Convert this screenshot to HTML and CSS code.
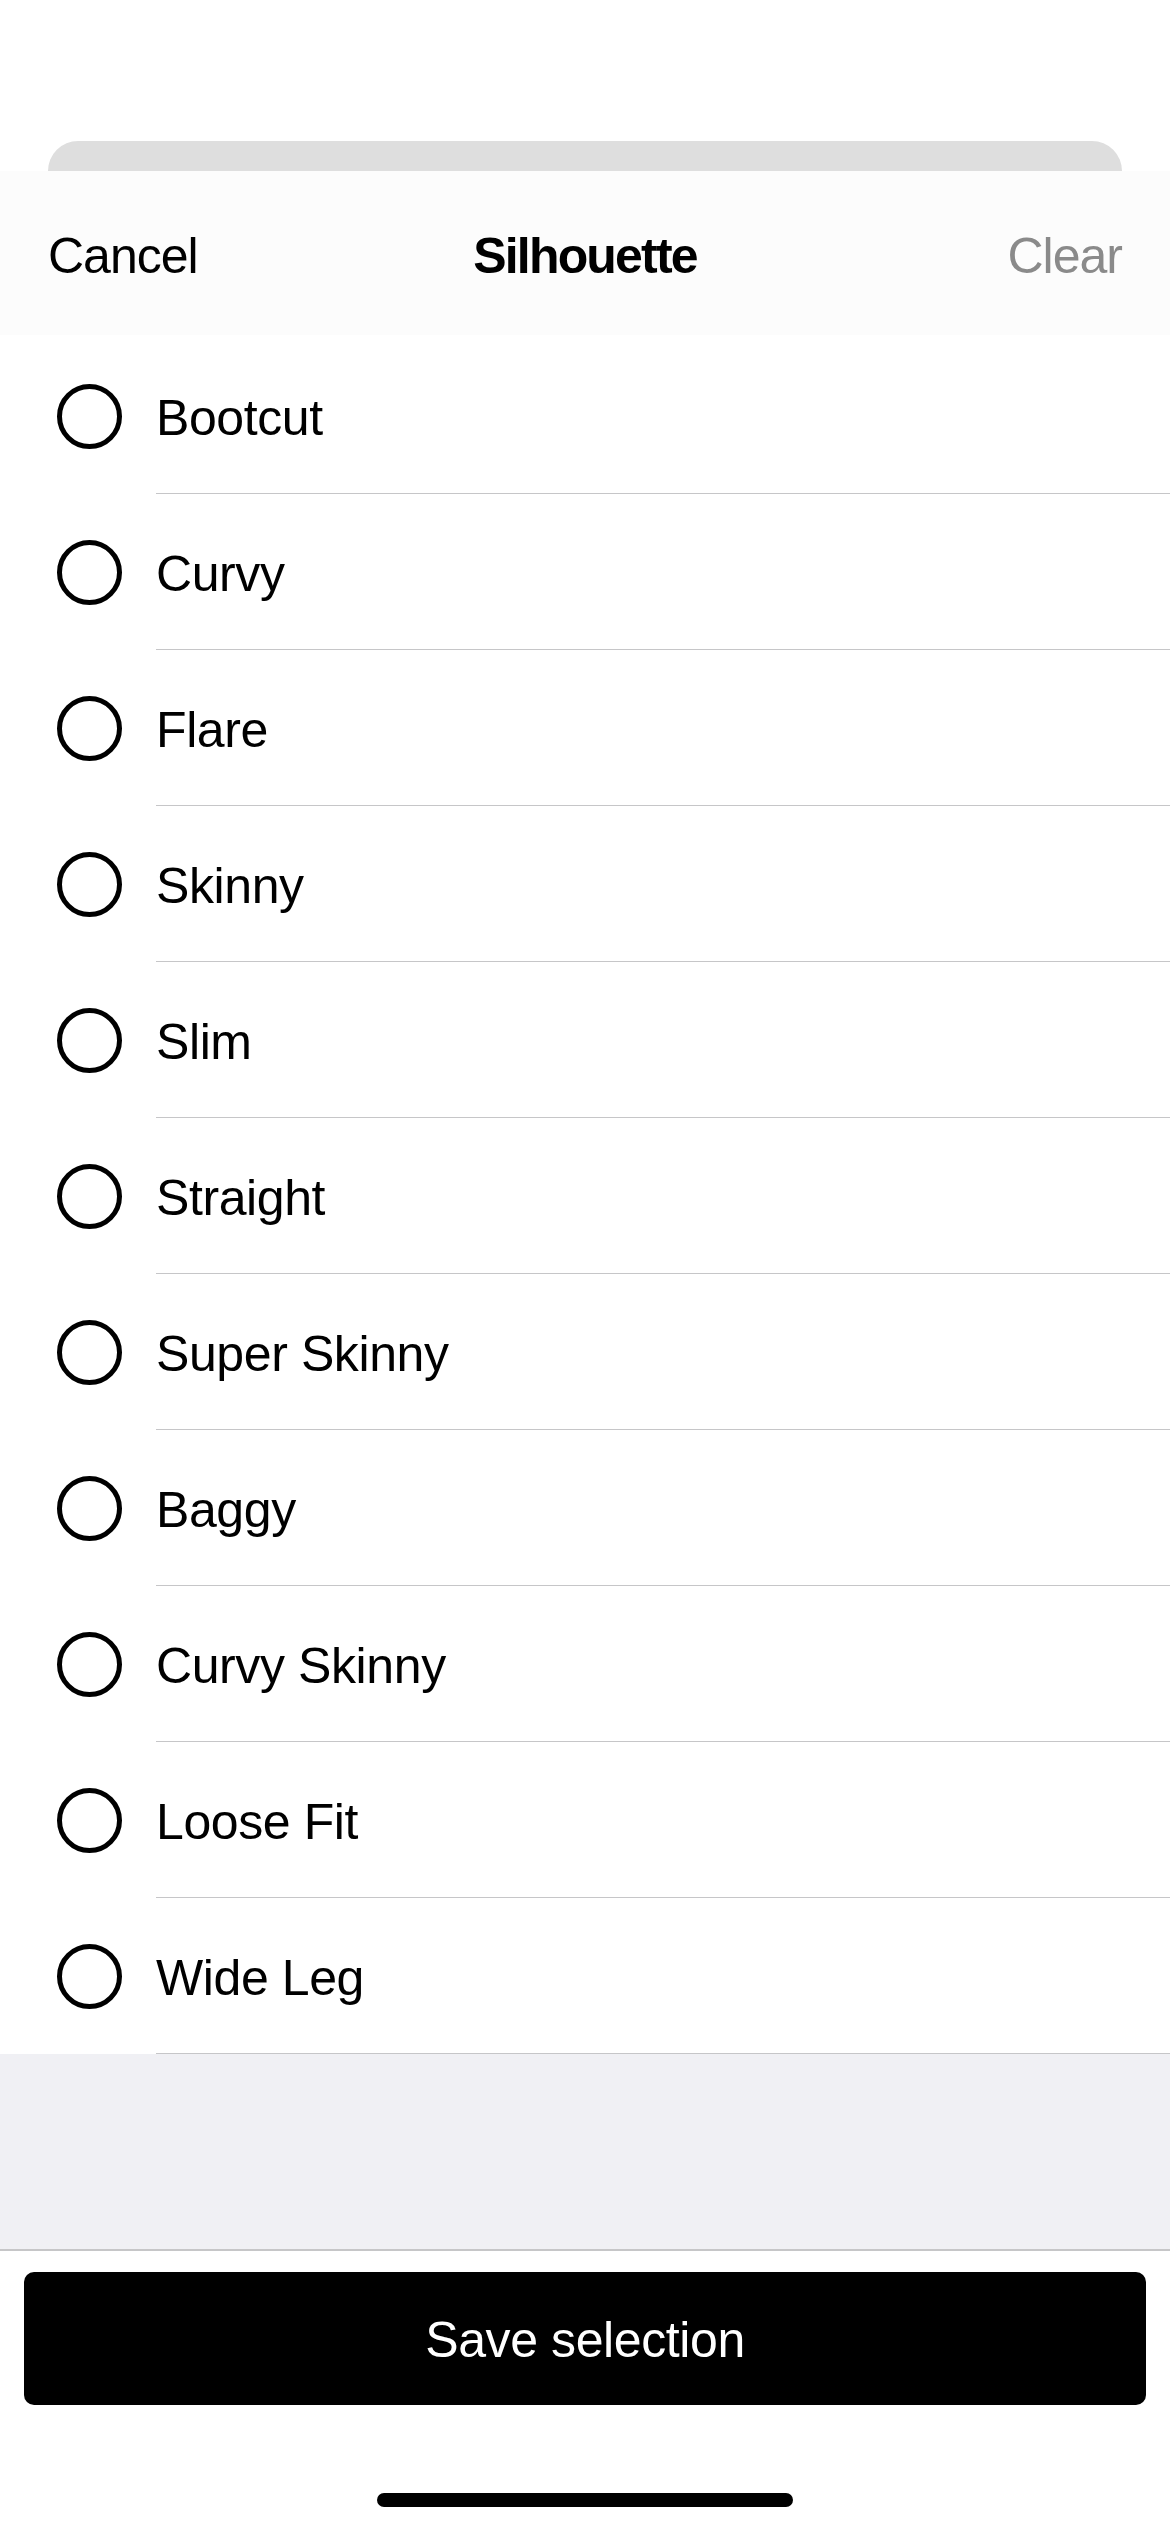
FILE: index.html
```html
<!DOCTYPE html>
<html lang="en">
<head>
  <meta charset="UTF-8" />
  <meta name="viewport" content="width=device-width, initial-scale=1.0"/>
  <title>Silhouette</title>
  <link rel="stylesheet" href="styles.css">
</head>
<body>

  <div class="sheet-behind"></div>

  <header class="sheet-header">
    <a class="header-link" href="#">Cancel</a>
    <h1>Silhouette</h1>
    <a class="header-link clear" href="#">Clear</a>
  </header>

  <ul class="option-list">
    <li class="option"><span class="radio"></span><span class="option-label">Bootcut</span></li>
    <li class="option"><span class="radio"></span><span class="option-label">Curvy</span></li>
    <li class="option"><span class="radio"></span><span class="option-label">Flare</span></li>
    <li class="option"><span class="radio"></span><span class="option-label">Skinny</span></li>
    <li class="option"><span class="radio"></span><span class="option-label">Slim</span></li>
    <li class="option"><span class="radio"></span><span class="option-label">Straight</span></li>
    <li class="option"><span class="radio"></span><span class="option-label">Super Skinny</span></li>
    <li class="option"><span class="radio"></span><span class="option-label">Baggy</span></li>
    <li class="option"><span class="radio"></span><span class="option-label">Curvy Skinny</span></li>
    <li class="option"><span class="radio"></span><span class="option-label">Loose Fit</span></li>
    <li class="option"><span class="radio"></span><span class="option-label">Wide Leg</span></li>
  </ul>

  <div class="filler"></div>

  <footer class="sheet-footer">
    <button class="save-button">Save selection</button>
    <div class="home-indicator"></div>
  </footer>

</body>
</html>
```

FILE: styles.css
```css
body {
  font-family: "Liberation Sans", Arial, sans-serif;
  background-color: #fff;
  color: #000;
  margin: 0;
  padding: 0;
}

/* card peeking out behind the sheet */
.sheet-behind {
  margin: 141px 48px 0;
  height: 30px;
  background: #dedede;
  border-radius: 30px 30px 0 0;
}

.sheet-header {
  display: grid;
  grid-template-columns: 1fr auto 1fr;
  align-items: center;
  height: 164px;
  padding: 0 48px;
  background: #fcfcfc;
}

.sheet-header h1 {
  margin: 0;
  font-size: 50px;
  font-weight: bold;
  letter-spacing: -1.8px;
  padding-top: 6px;
}

.header-link {
  color: #000;
  text-decoration: none;
  font-size: 50px;
  letter-spacing: -1px;
  padding-top: 6px;
}

.header-link.clear {
  color: #8a8a8a;
  justify-self: end;
}

.option-list {
  list-style: none;
  margin: 0;
  padding: 3px 0 0;
}

.option {
  display: flex;
  align-items: stretch;
  height: 156px;
}

.radio {
  flex: none;
  align-self: center;
  width: 65px;
  height: 65px;
  box-sizing: border-box;
  border: 5px solid #000;
  border-radius: 50%;
  margin: 0 34px 0 57px;
}

.option-label {
  flex: 1;
  display: flex;
  align-items: center;
  font-size: 50px;
  letter-spacing: -0.4px;
  border-bottom: 1px solid #c6c6c8;
  padding-top: 5px;
}

.filler {
  height: 195px;
  background: #f0f0f4;
  border-bottom: 2px solid #c6c6c8;
}

.sheet-footer {
  padding: 21px 24px 24px;
}

.save-button {
  display: block;
  width: 100%;
  height: 133px;
  padding-top: 4px;
  background-color: #000;
  color: #fff;
  border: none;
  border-radius: 10px;
  font-family: inherit;
  font-size: 50px;
  letter-spacing: -0.4px;
  cursor: pointer;
}

.home-indicator {
  width: 416px;
  height: 14px;
  margin: 88px auto 0;
  background: #000;
  border-radius: 7px;
}
```
